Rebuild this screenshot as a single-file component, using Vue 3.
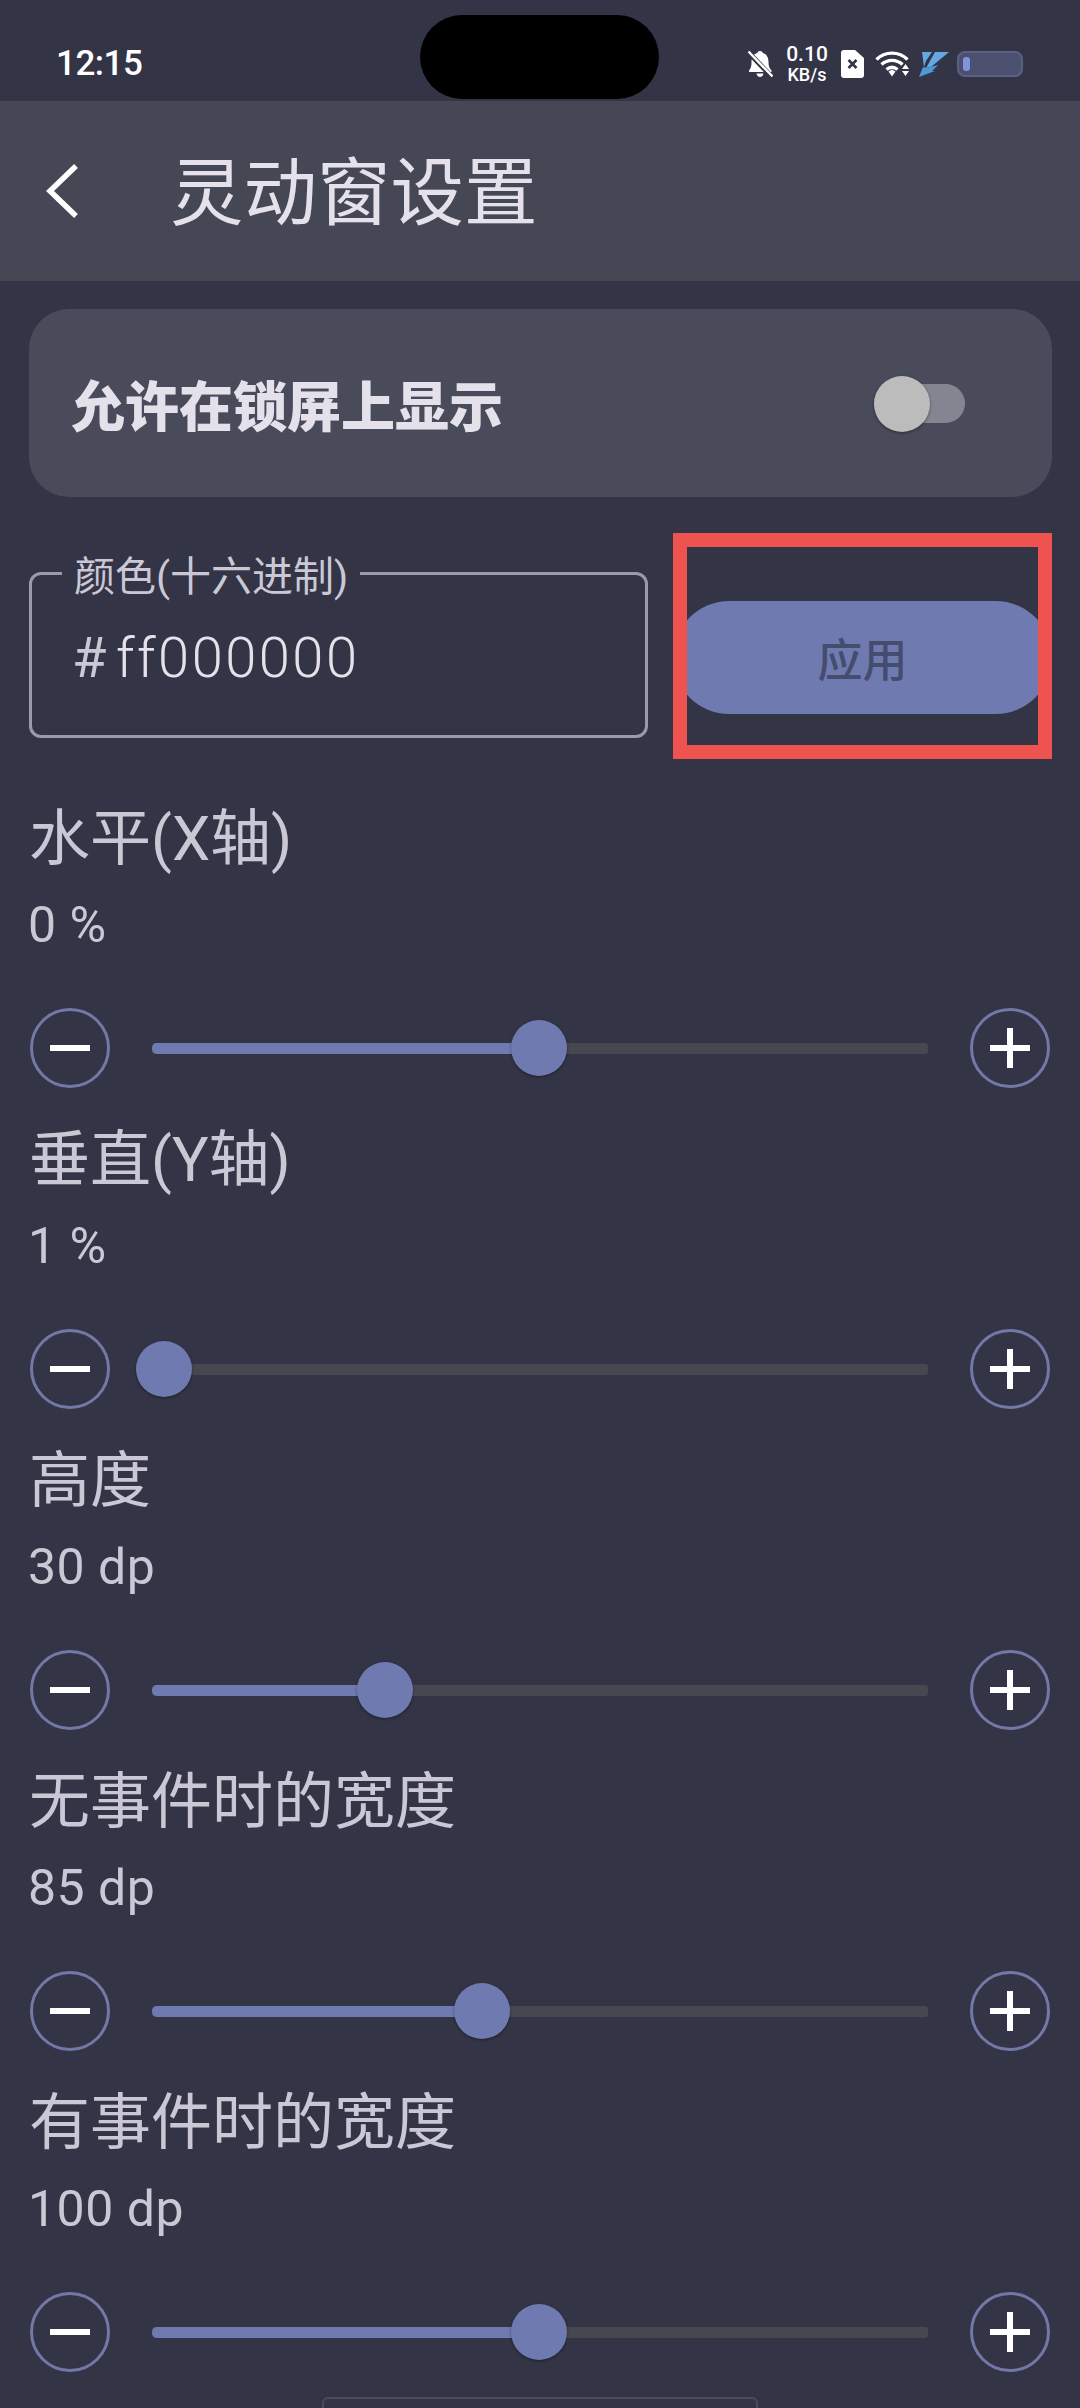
<template>
  <div class="screen">
    <div class="status-bar">
      <span class="clock">12:15</span>
      <div class="island" />
      <div class="status-icons">
        <svg class="ic-bell" width="26" height="28" viewBox="0 0 26 28">
          <path d="M13 1c1.500 0 2.500.8 2.800 2C20 4.200 21.500 8 21.500 12c0 4 .8 6 3 8.500V22H2v-1.500C4 18 4.500 16 4.500 12 4.500 8 6.200 4.200 10.200 3 10.500 1.800 11.500 1 13 1zM9.500 23.500h7c-.4 2-1.700 3.500-3.500 3.500s-3.100-1.500-3.500-3.500z" fill="#fff" />
          <path d="M1 2l24 25" stroke="#333445" stroke-width="5" />
          <path d="M1.500 1.500l24 25" stroke="#fff" stroke-width="2.400" />
        </svg>
        <div class="speed">
          <span class="speed-num">0.10</span>
          <span class="speed-unit">KB/s</span>
        </div>
        <svg class="ic-sim" width="23" height="28" viewBox="0 0 23 28">
          <path d="M3 0h11l9 8v17a3 3 0 0 1-3 3H3a3 3 0 0 1-3-3V3a3 3 0 0 1 3-3z" fill="#fff" />
          <path d="M7.500 10l8 8M15.500 10l-8 8" stroke="#333445" stroke-width="2.600" />
        </svg>
        <svg class="ic-wifi" width="35" height="27" viewBox="0 0 35 27">
          <path d="M1.500 9.500C10 1 24 1 32.500 9.500" fill="none" stroke="#fff" stroke-width="3.400" />
          <path d="M6.500 14.500C12.500 9 21.500 9 27.500 14.500" fill="none" stroke="#fff" stroke-width="3.400" />
          <path d="M11.500 19.500c3.500-3 7.500-3 11 0" fill="none" stroke="#fff" stroke-width="3.400" />
          <path d="M13.500 21.500l3.500-2 3.500 2-3.500 5z" fill="#fff" />
          <path d="M27 19l3.500-5 3.500 5zM27 21h7l-3.500 5z" fill="#fff" />
        </svg>
        <svg class="ic-bolt" width="30" height="26" viewBox="0 0 30 26">
          <path d="M3 1h10L7 10l-2 6zM16 1h14L12 16l-5 1z" fill="#63a8e0" />
          <path d="M8 17l11-3-6 6 3 0L0 26l4-10z" fill="#4f98d8" />
        </svg>
        <div class="battery"><div class="battery-fill" /></div>
      </div>
    </div>

    <header class="app-bar">
      <svg class="back" width="34" height="56" viewBox="0 0 34 56">
        <path d="M31 3L5 28l26 25" fill="none" stroke="#fff" stroke-width="5.500" />
      </svg>
      <h1 class="title">灵动窗设置</h1>
    </header>

    <main class="content">
      <section class="lock-card">
        <span class="lock-text">允许在锁屏上显示</span>
        <div class="switch"><div class="switch-thumb" /></div>
      </section>

      <div class="color-row">
        <div class="field">
          <span class="field-label">颜色(十六进制)</span>
          <span class="field-value"><span class="hash">#</span>ff000000</span>
        </div>
        <div class="mark">
          <button class="apply">应用</button>
        </div>
      </div>

      <div v-for="item in items" :key="item.label" class="setting">
        <div class="setting-label">{{ item.label }}</div>
        <div class="setting-value">{{ item.value }}</div>
        <div class="slider-row">
          <div class="round-btn">
            <svg width="40" height="40" viewBox="0 0 40 40"><path d="M0 20h40" stroke="#fff" stroke-width="6" /></svg>
          </div>
          <div class="slider">
            <div class="slider-fill" :style="{ width: item.pos + 'px' }" />
            <div class="slider-thumb" :style="{ left: item.pos + 'px' }" />
          </div>
          <div class="round-btn">
            <svg width="40" height="40" viewBox="0 0 40 40"><path d="M0 20h40M20 0v40" stroke="#fff" stroke-width="6" /></svg>
          </div>
        </div>
      </div>
    </main>

    <div class="nav-handle" />
  </div>
</template>

<script setup>
// pos is the thumb centre, in px from the track's left end
const items = [
  { label: '水平(X轴)', value: '0 %', pos: 387 },
  { label: '垂直(Y轴)', value: '1 %', pos: 12 },
  { label: '高度', value: '30 dp', pos: 233 },
  { label: '无事件时的宽度', value: '85 dp', pos: 330 },
  { label: '有事件时的宽度', value: '100 dp', pos: 387 },
]
</script>

<style>
body {
  margin: 0;
  background: #333445;
}
</style>

<style scoped>
.screen {
  position: relative;
  width: 1080px;
  height: 2408px;
  overflow: hidden;
  background: #333445;
  font-family: Roboto, "Noto Sans CJK SC", sans-serif;
  color: #e4e1ea;
}

.status-bar {
  height: 101px;
  display: flex;
  align-items: center;
  justify-content: space-between;
  padding: 26px 57px 0 56px;
  box-sizing: border-box;
}

.clock {
  font-size: 35px;
  font-weight: 500;
  letter-spacing: -0.5px;
  color: #fff;
}

.island {
  position: absolute;
  left: 420px;
  top: 15px;
  width: 239px;
  height: 84px;
  border-radius: 42px;
  background: #000;
}

.status-icons {
  display: flex;
  align-items: center;
}

.speed {
  display: flex;
  flex-direction: column;
  align-items: center;
  width: 42px;
  margin: 0 13px 0 13px;
  color: #fff;
  font-weight: 500;
  line-height: 1;
}

.speed-num {
  font-size: 21px;
}

.speed-unit {
  font-size: 18px;
  margin-top: 1px;
}

.ic-wifi {
  margin-left: 11px;
}

.ic-bolt {
  margin-left: 9px;
}

.battery {
  width: 66px;
  height: 26px;
  margin-left: 8px;
  box-sizing: border-box;
  padding: 4px;
  border-radius: 8px;
  border: 2px solid #5b6080;
  background: #4b5070;
}

.battery-fill {
  width: 7px;
  height: 100%;
  border-radius: 3px;
  background: #8095d8;
}

.app-bar {
  height: 180px;
  display: flex;
  align-items: center;
  background: #464755;
}

.back {
  margin-left: 45px;
}

.title {
  margin: 8px 0 0 91px;
  font-size: 73.5px;
  font-weight: 400;
  line-height: 1;
}

.content {
  padding: 28px 28px 0 29px;
}

.lock-card {
  height: 188px;
  padding: 0 87px 0 42px;
  border-radius: 40px;
  display: flex;
  align-items: center;
  justify-content: space-between;
  background: #494a5a;
}

.lock-text {
  font-size: 54px;
  font-weight: 900;
}

.switch {
  position: relative;
  width: 91px;
  height: 39px;
  border-radius: 20px;
  background: #858592;
}

.switch-thumb {
  position: absolute;
  left: 0;
  top: -8px;
  width: 56px;
  height: 56px;
  border-radius: 50%;
  background: #bcbcbc;
  box-shadow: 0 1px 3px rgba(0, 0, 0, 0.4);
}

.color-row {
  display: flex;
  gap: 25px;
  margin-top: 36px;
  align-items: flex-start;
}

.field {
  position: relative;
  width: 621px;
  height: 166px;
  margin-top: 39px;
  box-sizing: border-box;
  border: 3px solid #9a9aab;
  border-radius: 12px;
}

.field-label {
  position: absolute;
  left: 30px;
  top: -23px;
  padding: 0 12px;
  background: #333445;
  font-size: 41px;
  line-height: 50px;
  color: #cbc8d6;
}

.field-value {
  position: absolute;
  left: 40px;
  top: 50px;
  font-size: 56px;
  font-weight: 300;
  line-height: 66px;
  letter-spacing: 2.5px;
}

.hash {
  margin-right: 7px;
  font-weight: 400;
  color: #cbc8d6;
}

/* red annotation frame lies over the button */
.mark {
  position: relative;
  width: 380px;
  height: 226px;
  padding-top: 68px;
  box-sizing: border-box;
}

.mark::after {
  content: "";
  position: absolute;
  inset: 0;
  border: 14px solid #ee5350;
}

.apply {
  display: block;
  width: 100%;
  height: 113px;
  padding: 0;
  border: 0;
  border-radius: 57px;
  background: #6f7bb0;
  color: #454c6e;
  font-family: inherit;
  font-size: 45px;
  font-weight: 500;
}

.setting {
  margin-top: 32px;
}

.color-row + .setting {
  margin-top: 40px;
}

.setting-label {
  font-size: 61px;
  line-height: 80px;
  color: #cbc8d6;
}

.setting-value {
  margin: 16px 0 0 -1px;
  font-size: 50px;
  line-height: 60px;
  letter-spacing: 0.5px;
  color: #cbc8d6;
}

.slider-row {
  display: flex;
  align-items: center;
  margin-top: 53px;
  height: 80px;
  padding-left: 1px;
}

.round-btn {
  flex: none;
  width: 80px;
  height: 80px;
  box-sizing: border-box;
  border: 3px solid #7478a8;
  border-radius: 50%;
  display: flex;
  align-items: center;
  justify-content: center;
}

.slider {
  position: relative;
  flex: none;
  width: 776px;
  height: 11px;
  margin: 0 42px;
  border-radius: 3px;
  background: #47474f;
}

.slider-fill {
  height: 100%;
  border-radius: 5px 0 0 5px;
  background: #6f7bb0;
}

.slider-thumb {
  position: absolute;
  top: -23px;
  width: 56px;
  height: 56px;
  margin-left: -28px;
  border-radius: 50%;
  background: #6f7bb0;
  box-shadow: 0 1px 3px rgba(0, 0, 0, 0.4);
}

.nav-handle {
  position: absolute;
  left: 322px;
  top: 2397px;
  width: 436px;
  height: 20px;
  box-sizing: border-box;
  border: 2px solid #4a4b5c;
  border-radius: 6px;
}
</style>
